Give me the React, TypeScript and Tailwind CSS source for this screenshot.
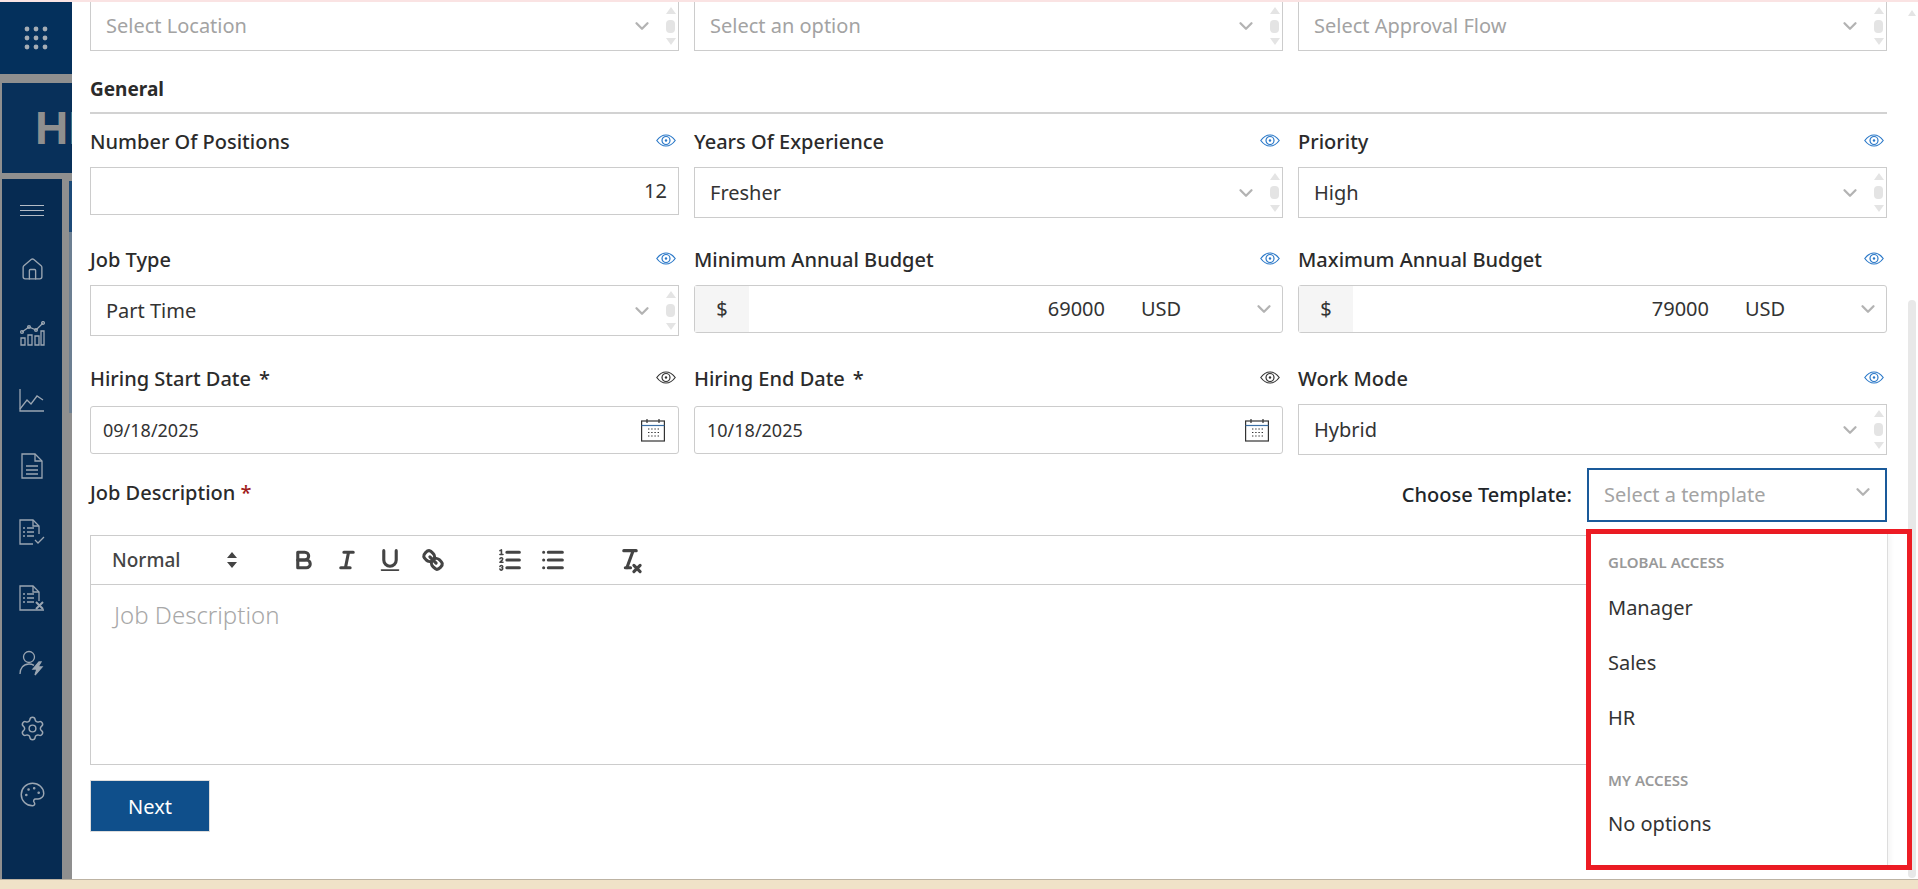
import type { ReactNode } from 'react';
import { ChevronDown, House, Palette, Settings } from 'lucide-react';

function Eye({ dark }: { dark?: boolean }) {
  const color = dark ? '#333333' : '#2a78c8';
  return (
    <svg width="20" height="13" viewBox="0 0 20 13" fill="none" stroke={color} strokeWidth="1.2">
      <path d="M0.8 6.5C3.4 2.9 6.4 1 10 1s6.6 1.9 9.2 5.5C16.6 10.1 13.6 12 10 12S3.4 10.1 0.8 6.5Z" />
      <circle cx="10" cy="6.5" r="4" />
      <circle cx="10" cy="6.5" r="1.2" fill={color} stroke="none" />
    </svg>
  );
}

function CalendarIcon() {
  return (
    <svg width="24" height="24" viewBox="0 0 24 24" fill="none" stroke="#333333" strokeWidth="1.2">
      <rect x="0.6" y="3" width="22.8" height="20" />
      <path d="M0.6 7.5h22.8" stroke="#3a6ea5" />
      <path d="M6 1v4M18 1v4" />
      <path d="M7 11h11M7 14.5h11M7 18h11" strokeDasharray="1.4 1.8" />
    </svg>
  );
}

// little native-looking scroll arrows inside the multi selects
function MiniScroll() {
  return (
    <div className="flex h-full w-[9px] flex-col items-center justify-between py-[5px]">
      <div className="h-0 w-0 border-x-[5px] border-b-[7px] border-x-transparent border-b-[#e4e4e4]" />
      <div className="h-[13px] w-[9px] rounded-[4px] bg-[#e4e4e4]" />
      <div className="h-0 w-0 border-x-[5px] border-t-[7px] border-x-transparent border-t-[#e4e4e4]" />
    </div>
  );
}

function SelectBox({ text, placeholder, className }: { text: string; placeholder?: boolean; className: string }) {
  return (
    <div className={`flex items-center border border-[#cccccc] bg-white pl-[15px] pr-[3px] ${className}`}>
      <span className={`flex-1 text-[20px] ${placeholder ? 'text-[#a3a3a3]' : 'text-[#333333]'}`}>{text}</span>
      <ChevronDown size={22} strokeWidth={2.5} color="#b3b3b3" className="mr-[13px]" />
      <MiniScroll />
    </div>
  );
}

function Field({ label, required, dark, children }: { label: string; required?: boolean; dark?: boolean; children: ReactNode }) {
  return (
    <div>
      <div className="flex h-[38px] items-start justify-between">
        <span className="h-[26px] text-[20px] font-medium leading-[26px] text-[#2b2b2b]">
          {label}
          {required && <span className="ml-[8px]">*</span>}
        </span>
        <span className="mr-[3px] mt-[5px]">
          <Eye dark={dark} />
        </span>
      </div>
      {children}
    </div>
  );
}

function BudgetInput({ value }: { value: string }) {
  return (
    <div className="flex h-[48px] items-center rounded-[3px] border border-[#cccccc] bg-white text-[20px] text-[#333333]">
      <span className="flex h-full w-[54px] items-center justify-center bg-[#f5f5f5]">$</span>
      <span className="flex-1 text-right">{value}</span>
      <span className="ml-[36px] w-[42px]">USD</span>
      <ChevronDown size={22} strokeWidth={2.5} color="#b3b3b3" className="ml-[70px] mr-[7px]" />
    </div>
  );
}

function DateInput({ value }: { value: string }) {
  return (
    <div className="mt-[2px] flex h-[48px] items-center justify-between rounded-[3px] border border-[#cccccc] bg-white pl-[12px] pr-[13px] text-[18px] text-[#333333]">
      <span>{value}</span>
      <CalendarIcon />
    </div>
  );
}

function ToolButton({ children }: { children: ReactNode }) {
  return (
    <span className="flex h-[43px] w-[43px] items-center justify-center">
      <svg width="28" height="28" viewBox="0 0 18 18" fill="none" stroke="#444444" strokeWidth="2" strokeLinecap="round" strokeLinejoin="round">
        {children}
      </svg>
    </span>
  );
}

const sideIconClass = 'flex h-[66px] items-center justify-center';

function Sidebar() {
  const stroke = { fill: 'none', stroke: '#9ba6b2', strokeWidth: 1.3 };
  return (
    <div className="flex w-[72px] flex-col bg-[#8f8f8f]">
      <div className="flex h-[72px] items-center justify-center bg-[#04305c]">
        <svg width="24" height="24" viewBox="0 0 24 24" fill="#a5acb4">
          {[3, 12, 21].map((y) =>
            [3, 12, 21].map((x) => <circle key={`${x}-${y}`} cx={x} cy={y} r="2.4" />),
          )}
        </svg>
      </div>
      <div className="ml-[2px] mt-[9px] flex h-[90px] items-center overflow-hidden bg-[#08305a] pl-[33px]">
        <span className="font-['Liberation_Sans',sans-serif] text-[46px] font-bold leading-none text-[#8f8f8f]">HR</span>
      </div>
      <div className="mt-[6px] flex flex-1">
        <div className="ml-[2px] flex w-[60px] flex-col items-center bg-[#062b52] pt-[15px]">
          <div className="flex h-[32px] flex-col justify-center gap-[4px]">
            <div className="h-px w-[24px] bg-[#b4bcc6]" />
            <div className="h-px w-[24px] bg-[#b4bcc6]" />
            <div className="h-px w-[24px] bg-[#b4bcc6]" />
          </div>
          <div className="mb-[3px] mt-[10px] flex h-[62px] items-center justify-center pt-[4px]">
            <House size={25} strokeWidth={1.3} color="#9ba6b2" />
          </div>
          <div className={sideIconClass}>
            <svg width="26" height="26" viewBox="0 0 26 26" {...stroke}>
              <path d="M2 17h4v7H2zM9 14h4v10H9zM16 15h4v9h-4zM22 10h3v14h-3z" />
              <path d="M3 11l7-5 7 3 7-7" />
              <circle cx="3" cy="11" r="1.4" />
              <circle cx="10" cy="6" r="1.4" />
              <circle cx="17" cy="9" r="1.4" />
              <circle cx="24" cy="2" r="1.4" />
            </svg>
          </div>
          <div className={sideIconClass}>
            <svg width="26" height="24" viewBox="0 0 26 24" {...stroke}>
              <path d="M1 1v22h24" />
              <path d="M1 21l7-9 4 4 6-8 6 4" />
            </svg>
          </div>
          <div className={sideIconClass}>
            <svg width="22" height="26" viewBox="0 0 22 26" {...stroke}>
              <path d="M1 1h13l7 7v17H1z" />
              <path d="M14 1v7h7" />
              <path d="M5 13h12M5 17h12M5 21h12" />
            </svg>
          </div>
          <div className={sideIconClass}>
            <svg width="26" height="26" viewBox="0 0 26 26" {...stroke}>
              <path d="M14 25H1V1h13l6 6v8" />
              <path d="M14 1v6h6" />
              <path d="M4 9h2M8 9h7M4 13h2M8 13h7M4 17h2M8 17h7" />
              <path d="M16 21l3 3 6-6" />
            </svg>
          </div>
          <div className={sideIconClass}>
            <svg width="26" height="26" viewBox="0 0 26 26" {...stroke}>
              <path d="M25 25H1V1h13l6 6v9" />
              <path d="M14 1v6h6" />
              <path d="M4 9h2M8 9h7M4 13h2M8 13h7M4 17h2M8 17h7" />
              <path d="M17 17l7 7M24 17l-7 7" strokeWidth="2" />
            </svg>
          </div>
          <div className="flex h-[64px] items-center justify-center">
            <svg width="27" height="26" viewBox="0 0 27 26" {...stroke}>
              <circle cx="10" cy="7" r="5.5" />
              <path d="M1 24c0-6 3.5-10 9-10 2 0 3.5.5 5 1.4" />
              <path d="M20 12l-6 7h4l-2 6 7-8h-4l3-5z" fill="#9ba6b2" />
            </svg>
          </div>
          <div className={sideIconClass}>
            <Settings size={27} strokeWidth={1.3} color="#9ba6b2" />
          </div>
          <div className={sideIconClass}>
            <Palette size={27} strokeWidth={1.3} color="#9ba6b2" />
          </div>
        </div>
        <div className="ml-[7px] w-[3px]">
          <div className="mt-[2px] h-[51px] bg-[#1c4a78]" />
          <div className="h-[181px] bg-[#6c7f92]" />
        </div>
      </div>
    </div>
  );
}

function TemplateMenu() {
  return (
    <div className="absolute left-[-3px] top-[calc(100%+9px)] z-10 h-[341px] w-[326px] border-[5px] border-[#ed1c24] bg-white">
      <div className="h-full w-[297px] border-r border-[#dddddd] pl-[17px] pt-[18px] text-[20px] text-[#333333] shadow-[2px_0_6px_rgba(0,0,0,0.05)]">
        <div className="h-[20px] text-[15px] font-semibold leading-[20px] text-[#999999]">GLOBAL ACCESS</div>
        <div className="mt-[8px] flex h-[55px] items-center">Manager</div>
        <div className="flex h-[55px] items-center">Sales</div>
        <div className="flex h-[55px] items-center">HR</div>
        <div className="mt-[25px] h-[20px] text-[15px] font-semibold leading-[20px] text-[#999999]">MY ACCESS</div>
        <div className="mt-[14px] flex h-[40px] items-center">No options</div>
      </div>
    </div>
  );
}

function Editor() {
  return (
    <div className="mt-[13px] flex h-[230px] flex-col border border-[#cccccc]">
      <div className="flex h-[49px] items-center border-b border-[#cccccc] text-[#444444]">
        <span className="ml-[21px] w-[114px] text-[19px] font-medium">Normal</span>
        <svg width="12" height="18" viewBox="0 0 12 18" fill="#444444">
          <path d="M6 1l5 6H1zM6 17l5-6H1z" />
        </svg>
        <span className="ml-[44px] flex">
          <ToolButton>
            <path d="M5,4H9.5A2.5,2.5,0,0,1,12,6.5v0A2.5,2.5,0,0,1,9.5,9H5A0,0,0,0,1,5,9V4A0,0,0,0,1,5,4Z" />
            <path d="M5,9h5.5A2.5,2.5,0,0,1,13,11.5v0A2.5,2.5,0,0,1,10.5,14H5a0,0,0,0,1,0,0V9A0,0,0,0,1,5,9Z" />
          </ToolButton>
          <ToolButton>
            <path d="M7 4h6M5 14h6M8 14l2-10" />
          </ToolButton>
          <ToolButton>
            <path d="M5,3V9a4.012,4.012,0,0,0,4,4H9a4.012,4.012,0,0,0,4-4V3" />
            <rect x="3" y="15" width="12" height="1" rx="0.5" fill="#444444" stroke="none" />
          </ToolButton>
          <ToolButton>
            <path d="M7 7l4 4" />
            <path d="M8.9,4.577a3.476,3.476,0,0,1,.36,4.679A3.476,3.476,0,0,1,4.577,8.9C3.185,7.5,2.035,6.4,4.217,4.217S7.5,3.185,8.9,4.577Z" />
            <path d="M13.423,9.1a3.476,3.476,0,0,0-4.679-.36,3.476,3.476,0,0,0,.36,4.679c1.392,1.392,2.5,2.542,4.679.36S14.815,10.5,13.423,9.1Z" />
          </ToolButton>
        </span>
        <span className="ml-[34px] flex">
          <ToolButton>
            <path d="M7 4h8M7 9h8M7 14h8" />
            <g strokeWidth="1">
              <path d="M2.5 5.5h2M3.5 5.5v-3l-1 .5" />
              <path d="M4.5,10.5h-2c0-.234,1.85-1.076,1.85-2.234A0.959,0.959,0,0,0,2.5,8.156" />
              <path d="M2.5,14.846a0.959,0.959,0,0,0,1.85-.109A0.7,0.7,0,0,0,3.75,14a0.688,0.688,0,0,0,.6-0.736,0.959,0.959,0,0,0-1.85-.109" />
            </g>
          </ToolButton>
          <ToolButton>
            <path d="M6 4h9M6 9h9M6 14h9M3 4h0M3 9h0M3 14h0" />
          </ToolButton>
        </span>
        <span className="ml-[34px] flex">
          <ToolButton>
            <path d="M5 3h8M6 14h3.35M11 3L7 14M11.5 12.5l4 4M15.5 12.5l-4 4" />
          </ToolButton>
        </span>
      </div>
      <div className="pl-[23px] pt-[12px] text-[24px] font-light text-[#a8a8a8]">Job Description</div>
    </div>
  );
}

export default function App() {
  return (
    <div className="flex h-screen w-full flex-col overflow-hidden bg-[#f0e2c8] font-['Noto_Sans',sans-serif]">
      <div className="h-[2px] bg-[#fae3e3]" />
      <div className="flex flex-1">
        <Sidebar />
        <main className="relative flex-1 bg-white pl-[18px] pr-[31px]">
          <div className="grid h-[49px] grid-cols-3 gap-x-[15px]">
            <SelectBox text="Select Location" placeholder className="h-[49px] border-t-0" />
            <SelectBox text="Select an option" placeholder className="h-[49px] border-t-0" />
            <SelectBox text="Select Approval Flow" placeholder className="h-[49px] border-t-0" />
          </div>

          <div className="flex h-[63px] items-end border-b-2 border-[#d2d2d2] pb-[10px] text-[19px] font-bold leading-[26px] text-[#2b2b2b]">
            General
          </div>

          <div className="mt-[15px] grid h-[118px] grid-cols-3 gap-x-[15px]">
            <Field label="Number Of Positions">
              <div className="flex h-[48px] items-center justify-end border border-[#cccccc] pr-[11px] text-[20px] text-[#333333]">12</div>
            </Field>
            <Field label="Years Of Experience">
              <SelectBox text="Fresher" className="h-[51px]" />
            </Field>
            <Field label="Priority">
              <SelectBox text="High" className="h-[51px]" />
            </Field>
          </div>

          <div className="grid h-[119px] grid-cols-3 gap-x-[15px]">
            <Field label="Job Type">
              <SelectBox text="Part Time" className="h-[51px]" />
            </Field>
            <Field label="Minimum Annual Budget">
              <BudgetInput value="69000" />
            </Field>
            <Field label="Maximum Annual Budget">
              <BudgetInput value="79000" />
            </Field>
          </div>

          <div className="grid h-[102px] grid-cols-3 gap-x-[15px]">
            <Field label="Hiring Start Date" required dark>
              <DateInput value="09/18/2025" />
            </Field>
            <Field label="Hiring End Date" required dark>
              <DateInput value="10/18/2025" />
            </Field>
            <Field label="Work Mode">
              <SelectBox text="Hybrid" className="h-[51px]" />
            </Field>
          </div>

          <div className="flex h-[54px] items-center justify-between">
            <span className="mb-[4px] text-[20px] font-medium text-[#2b2b2b]">
              Job Description <span className="text-[#a01c1c]">*</span>
            </span>
            <div className="flex items-center gap-[15px]">
              <span className="text-[20px] font-medium text-[#212529]">Choose Template:</span>
              <div className="relative flex h-[54px] w-[300px] items-center justify-between border-2 border-[#1a5a9a] bg-white pl-[15px] pr-[11px]">
                <span className="text-[20px] text-[#a3a3a3]">Select a template</span>
                <ChevronDown size={22} strokeWidth={2.5} color="#b3b3b3" className="mb-[6px]" />
                <TemplateMenu />
              </div>
            </div>
          </div>

          <Editor />

          <button className="mt-[15px] flex h-[52px] w-[120px] items-center justify-center border border-[#dddddd] bg-[#0f4f8b] pt-[2px] text-[20px] text-white">Next</button>

          <div className="absolute bottom-0 right-0 top-[8px] w-[10px]">
            <div className="h-0 w-0 border-x-[4px] border-b-[6px] border-x-transparent border-b-[#e4e4e4]" />
            <div className="mt-[284px] h-[578px] w-[8px] rounded-[4px] bg-[#e8e8e8]" />
          </div>
        </main>
      </div>
      <div className="h-[10px] border-t border-[#bdb3a3]" />
    </div>
  );
}
